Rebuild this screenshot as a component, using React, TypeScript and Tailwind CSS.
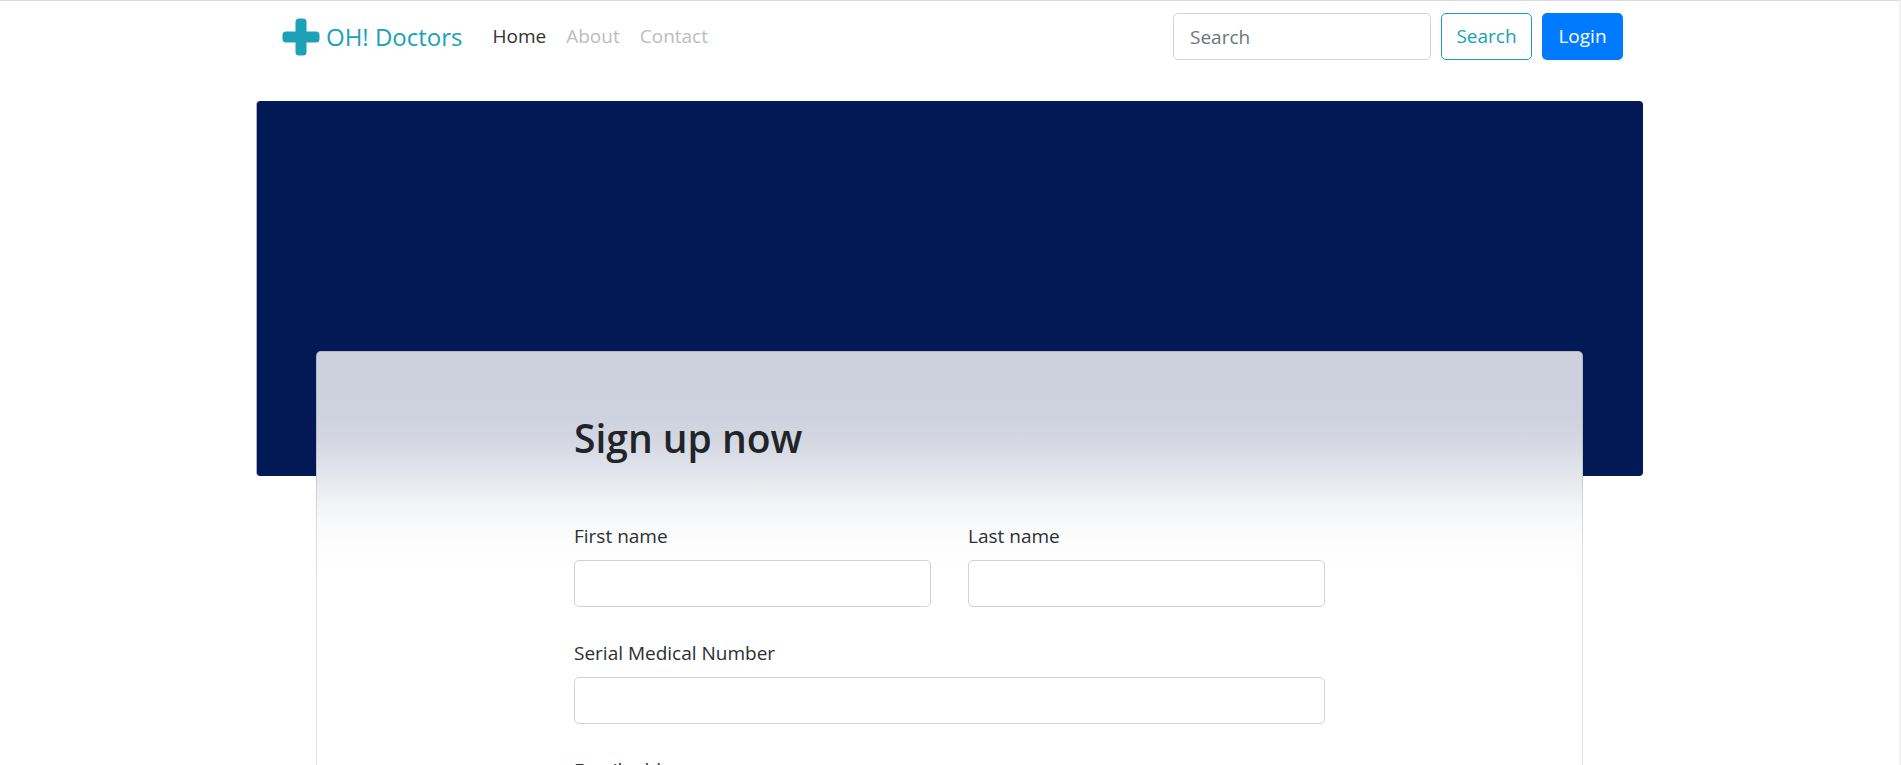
import React from "react";

const navLinks = [
  { label: "Home", active: true },
  { label: "About", active: false },
  { label: "Contact", active: false },
];

function CrossLogo() {
  return (
    <svg viewBox="0 0 38 38" className="h-[38px] w-[38px]" aria-hidden="true">
      <rect x="13.5" y="0.5" width="11" height="37" rx="3.5" fill="#1ca1b8" />
      <rect x="0.5" y="13.5" width="37" height="11" rx="3.5" fill="#1ca1b8" />
    </svg>
  );
}

function Header() {
  return (
    <header className="mx-auto flex w-full max-w-[1387px] items-center pt-3 pr-5 pl-[26px]">
      <a href="#" className="flex items-center gap-1.5 text-2xl text-[#17a2b8]">
        <CrossLogo />
        OH! Doctors
      </a>
      <nav className="ml-[30px] flex gap-5">
        {navLinks.map((link) => (
          <a
            key={link.label}
            href="#"
            className={link.active ? "text-[#333333]" : "text-[#bcbcbc]"}
          >
            {link.label}
          </a>
        ))}
      </nav>
      <form className="ml-auto flex gap-2.5" onSubmit={(e) => e.preventDefault()}>
        <input
          type="search"
          placeholder="Search"
          aria-label="Search"
          className="h-[47px] w-[258px] rounded-[5px] border border-[#ced4da] px-4 placeholder:text-[#6c757d]"
        />
        <button
          type="submit"
          className="h-[47px] w-[91px] rounded-[5px] border border-[#17a2b8] text-[#17a2b8]"
        >
          Search
        </button>
        <button type="button" className="h-[47px] w-[81px] rounded-[5px] bg-[#007bff] text-white">
          Login
        </button>
      </form>
    </header>
  );
}

function Field({ id, label, type = "text" }: { id: string; label: string; type?: string }) {
  return (
    <div className="flex flex-col gap-2">
      <label htmlFor={id} className="leading-8 text-[#2b2f33]">
        {label}
      </label>
      <input
        id={id}
        type={type}
        className="h-[47px] w-full rounded-[5px] border border-[#ced4da] bg-white px-4"
      />
    </div>
  );
}

export default function App() {
  return (
    <div className="h-screen overflow-y-auto border-t border-r-2 border-t-[#dcdcdc] border-r-[#f0f0f0] bg-white font-['Open_Sans','Noto_Sans',sans-serif] text-[19px] text-[#212529] [scrollbar-width:none]">
      <Header />
      <main className="mx-auto mt-[41px] w-full max-w-[1387px]">
        <div className="h-[375px] rounded-[4px] border-l border-l-[#a9b0c8] bg-[#031955]" />
        <section className="relative mx-[60px] -mt-[125px] rounded-[5px] border border-black/12 bg-[linear-gradient(to_bottom,#cdd1dd_0px,#ced2de_60px,#d3d6e1_85px,#dadde7_103px,#e3e6ed_124px,#e9eaee_133px,#f1f2f6_150px,#f8f9fb_170px,#fdfdfd_195px,#ffffff_225px)] bg-origin-border pt-[62px] pb-16">
          <form
            className="mx-auto flex max-w-[751px] flex-col gap-[30px]"
            onSubmit={(e) => e.preventDefault()}
          >
            <h2 className="mb-7 text-[39px] leading-[48px] font-semibold">Sign up now</h2>
            <div className="grid grid-cols-2 gap-[37px]">
              <Field id="first-name" label="First name" />
              <Field id="last-name" label="Last name" />
            </div>
            <Field id="serial-number" label="Serial Medical Number" />
            <Field id="email" label="Email address" type="email" />
          </form>
        </section>
      </main>
    </div>
  );
}
